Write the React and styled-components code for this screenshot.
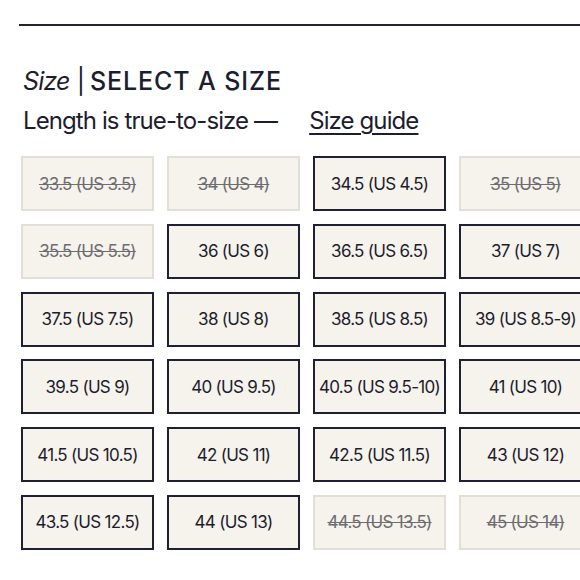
import styled, { createGlobalStyle } from "styled-components";

const GlobalStyle = createGlobalStyle`
  html, body {
    margin: 0;
    padding: 0;
    background: #ffffff;
    overflow: hidden;
  }
  body {
    font-family: Inter, "Liberation Sans", sans-serif;
    color: #1c1d2e;
  }
`;

const Page = styled.div`
  width: 580px;
  height: 580px;
  overflow: hidden;
`;

const Rule = styled.div`
  margin: 24px 0 0 19px;
  height: 2px;
  background: #22233a;
`;

const Section = styled.div`
  padding: 0 0 0 21px;
`;

const Heading = styled.div`
  margin-top: 39px;
  font-size: 25px;
  line-height: 32px;
  display: flex;
  align-items: baseline;
  padding-left: 2px;
`;

const Italic = styled.span`
  font-style: italic;
  letter-spacing: -0.8px;
`;

const Pipe = styled.span`
  margin: 0 5px 0 7px;
`;

const Caps = styled.span`
  font-weight: 500;
  letter-spacing: 0.9px;
`;

const Note = styled.div`
  font-size: 24px;
  line-height: 32px;
  margin-top: 8px;
  padding-left: 2px;
  letter-spacing: -0.9px;
  display: flex;
  align-items: baseline;
  white-space: pre;
`;

const GuideLink = styled.a`
  margin-left: 32px;
  color: #1c1d2e;
  text-decoration: underline;
  text-underline-offset: 4px;
  text-decoration-thickness: 1.5px;
`;

const Grid = styled.div`
  margin-top: 19px;
  display: grid;
  grid-template-columns: repeat(4, 133px);
  grid-auto-rows: 55px;
  column-gap: 13px;
  row-gap: 12.8px;
`;

const SizeBox = styled.div`
  box-sizing: border-box;
  display: flex;
  align-items: center;
  justify-content: center;
  background: #f6f2ec;
  border: 2px solid ${(p) => (p.$soldOut ? "#e2ded8" : "#1f2033")};
  color: ${(p) => (p.$soldOut ? "#6d6c70" : "#1c1d2e")};
  text-decoration: ${(p) => (p.$soldOut ? "line-through" : "none")};
  font-size: 17px;
  letter-spacing: -0.7px;
  white-space: nowrap;
`;

const sizes = [
  ["33.5 (US 3.5)", true],
  ["34 (US 4)", true],
  ["34.5 (US 4.5)", false],
  ["35 (US 5)", true],
  ["35.5 (US 5.5)", true],
  ["36 (US 6)", false],
  ["36.5 (US 6.5)", false],
  ["37 (US 7)", false],
  ["37.5 (US 7.5)", false],
  ["38 (US 8)", false],
  ["38.5 (US 8.5)", false],
  ["39 (US 8.5-9)", false],
  ["39.5 (US 9)", false],
  ["40 (US 9.5)", false],
  ["40.5 (US 9.5-10)", false],
  ["41 (US 10)", false],
  ["41.5 (US 10.5)", false],
  ["42 (US 11)", false],
  ["42.5 (US 11.5)", false],
  ["43 (US 12)", false],
  ["43.5 (US 12.5)", false],
  ["44 (US 13)", false],
  ["44.5 (US 13.5)", true],
  ["45 (US 14)", true],
];

const App = () => {
  return (
    <Page>
      <GlobalStyle />
      <Rule />
      <Section>
        <Heading>
          <Italic>Size</Italic>
          <Pipe>|</Pipe>
          <Caps>SELECT A SIZE</Caps>
        </Heading>
        <Note>
          Length is true-to-size —<GuideLink href="#">Size guide</GuideLink>
        </Note>
        <Grid>
          {sizes.map(([label, soldOut]) => (
            <SizeBox key={label} $soldOut={soldOut}>
              {label}
            </SizeBox>
          ))}
        </Grid>
      </Section>
    </Page>
  );
};

export default App;
